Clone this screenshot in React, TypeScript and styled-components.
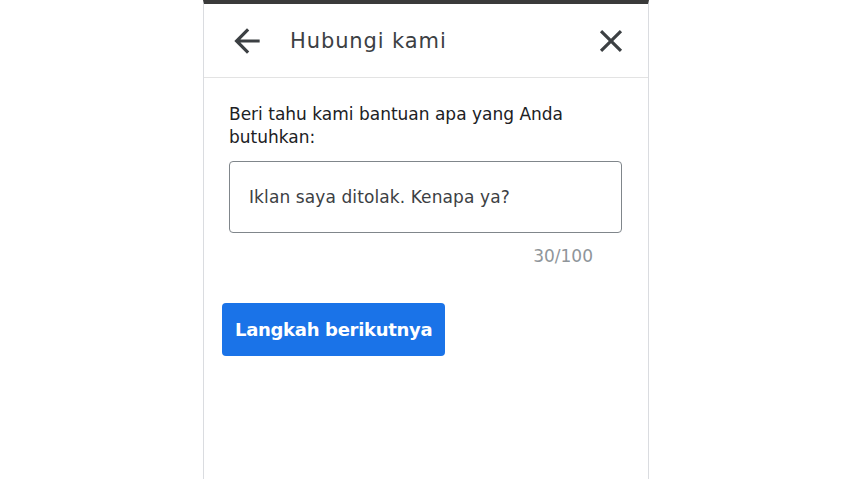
import styled, { createGlobalStyle } from 'styled-components'

const GlobalStyle = createGlobalStyle`
  html, body {
    margin: 0;
    padding: 0;
    background: #ffffff;
  }
  body {
    font-family: "DejaVu Sans", Roboto, "Liberation Sans", sans-serif;
  }
`

const Panel = styled.div`
  width: 446px;
  height: 479px;
  margin-left: 203px;
  box-sizing: border-box;
  border-top: 4px solid #3a3a3a;
  border-left: 1px solid #dadce0;
  border-right: 1px solid #dadce0;
  display: flex;
  flex-direction: column;
`

const Header = styled.div`
  height: 74px;
  box-sizing: border-box;
  border-bottom: 1px solid #e3e3e3;
  display: flex;
  align-items: center;
  padding: 0 18px 0 24px;
  gap: 24px;
`

const IconButton = styled.button`
  border: none;
  background: none;
  padding: 0;
  width: 38px;
  height: 38px;
  display: flex;
  align-items: center;
  justify-content: center;
  color: #3c4043;
  cursor: pointer;
`

const Title = styled.h1`
  flex: 1;
  margin: 0;
  font-size: 21px;
  font-weight: 400;
  color: #3c4043;
  letter-spacing: 0.9px;
`

const Body = styled.div`
  padding: 25px 25px 0 25px;
  display: flex;
  flex-direction: column;
`

const Label = styled.p`
  margin: 0;
  font-size: 17px;
  line-height: 23px;
  color: #202124;
  width: 393px;
`

const InputBox = styled.div`
  margin-top: 12px;
  height: 72px;
  width: 393px;
  box-sizing: border-box;
  border: 1px solid #80868b;
  border-radius: 4px;
  display: flex;
  align-items: center;
  padding: 0 19px;
  font-size: 17px;
  letter-spacing: 0.1px;
  color: #3c4043;
`

const Counter = styled.div`
  width: 364px;
  text-align: right;
  margin-top: 13px;
  font-size: 17px;
  line-height: 20px;
  color: #8f959a;
`

const PrimaryButton = styled.button`
  align-self: flex-start;
  margin: 37px 0 0 -7px;
  height: 53px;
  padding: 0 13px;
  border: none;
  border-radius: 4px;
  background: #1a73e8;
  color: #ffffff;
  font-family: "DejaVu Sans", Roboto, sans-serif;
  font-size: 18px;
  font-weight: 700;
  letter-spacing: -0.3px;
  cursor: pointer;
`

function BackIcon() {
  return (
    <svg width="38" height="38" viewBox="0 0 24 24" fill="currentColor">
      <path d="M20 11H7.83l5.59-5.59L12 4l-8 8 8 8 1.41-1.41L7.83 13H20v-2z" />
    </svg>
  )
}

function CloseIcon() {
  return (
    <svg width="38" height="38" viewBox="0 0 24 24" fill="currentColor">
      <path d="M19 6.41L17.59 5 12 10.59 6.41 5 5 6.41 10.59 12 5 17.59 6.41 19 12 13.41 17.59 19 19 17.59 13.41 12z" />
    </svg>
  )
}

export default function App() {
  return (
    <>
      <GlobalStyle />
      <Panel>
        <Header>
          <IconButton aria-label="Kembali">
            <BackIcon />
          </IconButton>
          <Title>Hubungi kami</Title>
          <IconButton aria-label="Tutup">
            <CloseIcon />
          </IconButton>
        </Header>
        <Body>
          <Label>Beri tahu kami bantuan apa yang Anda butuhkan:</Label>
          <InputBox>Iklan saya ditolak. Kenapa ya?</InputBox>
          <Counter>30/100</Counter>
          <PrimaryButton>Langkah berikutnya</PrimaryButton>
        </Body>
      </Panel>
    </>
  )
}
